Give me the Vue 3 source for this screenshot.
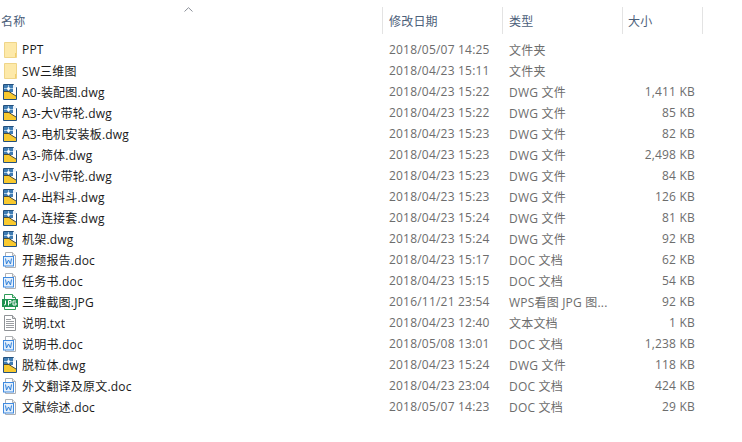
<template>
  <main class="explorer">
    <header class="head">
      <div class="col name">
        <span>名称</span>
        <svg class="sort" width="9" height="5" viewBox="0 0 9 5"><path d="M.5 4.500 4.500.7l4 3.800" fill="none" stroke="#8a8f98" /></svg>
      </div>
      <div class="col date">修改日期</div>
      <div class="col type">类型</div>
      <div class="col size">大小</div>
    </header>

    <section class="rows">
      <div v-for="f in files" :key="f.name" class="row">
        <div class="cell name">
          <svg class="icon" width="16" height="16" viewBox="0 0 16 16">
            <template v-if="f.icon === 'folder'">
              <path d="M2.500.5h12v15h-12z" fill="#fde9a9" stroke="#efd588" />
              <path d="M13 11h1v4h-1z" fill="#f3cf6c" />
            </template>
            <template v-else-if="f.icon === 'dwg'">
              <path d="M1.500.5h10l3 3v12h-13z" fill="#fff" stroke="#23507e" />
              <path d="M2 1h9v7H2z" fill="#3f7cb3" />
              <path d="M11 1h3v3h-3z" fill="#eef4fa" />
              <path d="M2 4.500h9M6.500 1v7" stroke="#a9cbe6" />
              <circle cx="6.500" cy="4.500" r="1.500" fill="#fff" />
              <path d="M2 7.500h5l3 2 4 2.500v3H2z" fill="#f8c92f" />
              <path d="M2 7.500h5l3 2 4 2.500" fill="none" stroke="#4a4a3a" />
            </template>
            <template v-else-if="f.icon === 'doc'">
              <path d="M3.500.5h7l3 3v12h-10z" fill="#fff" stroke="#aeb1b5" />
              <path d="M10.500.5v3h3" fill="#eee" stroke="#aeb1b5" />
              <rect x="1.500" y="4.500" width="10" height="9.500" fill="#e4f0fc" stroke="#3f8ae0" />
              <path d="m3.500 6.500 1 5.500 2-4 2 4 1-5.500" fill="none" stroke="#2f7fd9" />
            </template>
            <template v-else-if="f.icon === 'jpg'">
              <path d="M2.500.5h8l3 3v12h-11z" fill="#fff" stroke="#2f9c58" />
              <path d="M10.500.5v3h3" fill="#cfe9d8" stroke="#2f9c58" />
              <rect x="0" y="5" width="16" height="8" fill="#1f9150" />
              <path d="M3.500 6.500v4l-1.500.5M6.500 11.500v-5h2.500v2.500H6.500M14 7h-3v4h3V9h-1.500" fill="none" stroke="#fff" />
            </template>
            <template v-else>
              <path d="M2.500.5h8l3 3v12h-11z" fill="#fff" stroke="#8f9296" />
              <path d="M10.500.5v3h3" fill="#ddd" stroke="#8f9296" />
              <path d="M4 4.500h5M4 6.500h8M4 8.500h8M4 10.500h8M4 12.500h8" stroke="#9a9da1" />
            </template>
          </svg>
          <span class="file">{{ f.name }}</span>
        </div>
        <div class="cell date">{{ f.date }}</div>
        <div class="cell type">{{ f.type }}</div>
        <div class="cell size">{{ f.size }}</div>
      </div>
    </section>
  </main>
</template>

<script setup>
const files = [
  { name: 'PPT', date: '2018/05/07 14:25', type: '文件夹', size: '', icon: 'folder' },
  { name: 'SW三维图', date: '2018/04/23 15:11', type: '文件夹', size: '', icon: 'folder' },
  { name: 'A0-装配图.dwg', date: '2018/04/23 15:22', type: 'DWG 文件', size: '1,411 KB', icon: 'dwg' },
  { name: 'A3-大V带轮.dwg', date: '2018/04/23 15:22', type: 'DWG 文件', size: '85 KB', icon: 'dwg' },
  { name: 'A3-电机安装板.dwg', date: '2018/04/23 15:23', type: 'DWG 文件', size: '82 KB', icon: 'dwg' },
  { name: 'A3-筛体.dwg', date: '2018/04/23 15:23', type: 'DWG 文件', size: '2,498 KB', icon: 'dwg' },
  { name: 'A3-小V带轮.dwg', date: '2018/04/23 15:23', type: 'DWG 文件', size: '84 KB', icon: 'dwg' },
  { name: 'A4-出料斗.dwg', date: '2018/04/23 15:23', type: 'DWG 文件', size: '126 KB', icon: 'dwg' },
  { name: 'A4-连接套.dwg', date: '2018/04/23 15:24', type: 'DWG 文件', size: '81 KB', icon: 'dwg' },
  { name: '机架.dwg', date: '2018/04/23 15:24', type: 'DWG 文件', size: '92 KB', icon: 'dwg' },
  { name: '开题报告.doc', date: '2018/04/23 15:17', type: 'DOC 文档', size: '62 KB', icon: 'doc' },
  { name: '任务书.doc', date: '2018/04/23 15:15', type: 'DOC 文档', size: '54 KB', icon: 'doc' },
  { name: '三维截图.JPG', date: '2016/11/21 23:54', type: 'WPS看图 JPG 图...', size: '92 KB', icon: 'jpg' },
  { name: '说明.txt', date: '2018/04/23 12:40', type: '文本文档', size: '1 KB', icon: 'txt' },
  { name: '说明书.doc', date: '2018/05/08 13:01', type: 'DOC 文档', size: '1,238 KB', icon: 'doc' },
  { name: '脱粒体.dwg', date: '2018/04/23 15:24', type: 'DWG 文件', size: '118 KB', icon: 'dwg' },
  { name: '外文翻译及原文.doc', date: '2018/04/23 23:04', type: 'DOC 文档', size: '424 KB', icon: 'doc' },
  { name: '文献综述.doc', date: '2018/05/07 14:23', type: 'DOC 文档', size: '29 KB', icon: 'doc' }
]
</script>

<style>
html, body {
  background: #fff;
  overflow: hidden;
}
</style>

<style scoped>
.explorer {
  width: 742px;
  height: 442px;
  box-sizing: border-box;
  padding-top: 7px;
  font-family: "Open Sans", "Noto Sans CJK SC", sans-serif;
  font-size: 12px;
  letter-spacing: 0.2px;
  color: #6d6d6d;
  background: #fff;
}

.head {
  display: flex;
  height: 27px;
  color: #4c607a;
}

.rows {
  display: flex;
  flex-direction: column;
  margin-top: 5px;
}

.col {
  display: flex;
  align-items: center;
  border-right: 1px solid #e3e3e3;
  box-sizing: border-box;
  position: relative;
}

.col.name {
  width: 383px;
  padding-left: 1px;
}

.col.date,
.col.type {
  width: 120px;
  padding-left: 6px;
}

.col.size {
  width: 80px;
  padding-left: 5px;
}

.sort {
  position: absolute;
  left: 184px;
  top: 0;
}

.row {
  display: flex;
  height: 21px;
  align-items: center;
}

.cell {
  box-sizing: border-box;
  white-space: nowrap;
}

.cell.name {
  display: flex;
  align-items: center;
  width: 384px;
  height: 21px;
  padding-left: 2px;
  color: #1a1a1a;
}

.cell.date,
.cell.type {
  width: 120px;
  padding-left: 5px;
}

.icon {
  flex: none;
  align-self: flex-start;
  margin: 3px 4px 0 0;
}

.cell.size {
  width: 71px;
  text-align: right;
}
</style>
